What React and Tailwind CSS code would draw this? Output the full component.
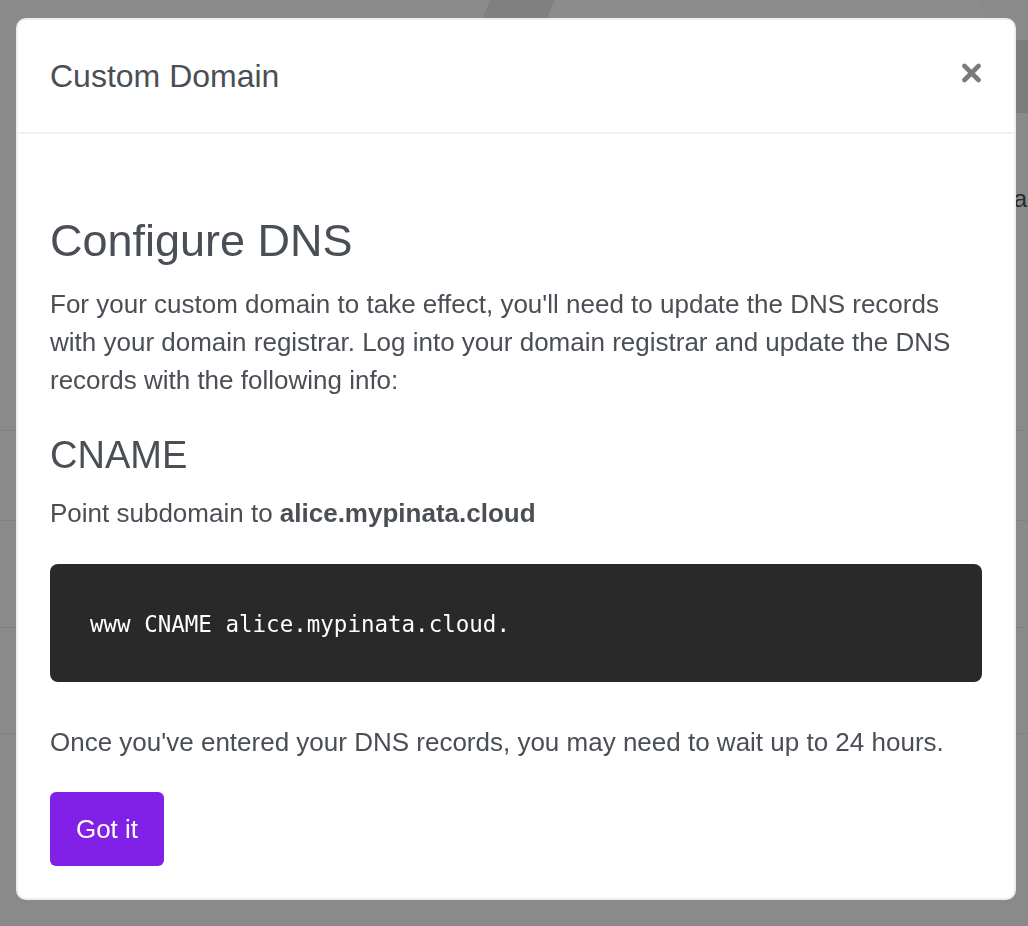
import React from 'react';

const CloseIcon = () => (
    <svg width="21" height="20" viewBox="0 0 21 20" aria-hidden="true">
        <path d="M3.5 3 L17.5 17 M17.5 3 L3.5 17" stroke="#7b7b7b" strokeWidth="4.6" strokeLinecap="round" />
    </svg>
);

const BackdropPage = () => (
    <div className="relative w-full h-[926px] bg-[#8a8a8a] overflow-hidden">
        <svg className="absolute top-0 left-0" width="1028" height="40" aria-hidden="true">
            <polygon points="490,0 555,0 546,20 482,20" fill="#808080" />
            <polygon points="555,0 980,0 985,20 546,20" fill="#8c8c8c" />
        </svg>
        <div className="flex flex-col pt-[40px]">
            <div className="flex justify-end">
                <div className="w-[12px] h-[73px] bg-[#7c7c7c]" />
            </div>
            <div className="flex justify-end h-[317px] pt-[74px]">
                <span className="text-[24px] leading-none text-[#2a2a2a] pr-[1px]" style={{ fontFamily: '"Liberation Sans", Arial, sans-serif' }}>a</span>
            </div>
            <div className="h-[90px] border-t border-[#818181]" />
            <div className="h-[107px] border-t border-[#818181]" />
            <div className="h-[106px] border-t border-[#818181]" />
            <div className="h-[106px] border-t border-[#818181]" />
        </div>
    </div>
);

const CustomDomainModal = () => (
    <div className="fixed inset-0 flex items-start">
        <div
            className="ml-[16px] mt-[18px] w-[1000px] h-[882px] bg-white rounded-[10px] border-2 border-[#eeeeee] flex flex-col text-[#4a4e55]"
            style={{ fontFamily: '"Liberation Sans", Arial, Helvetica, sans-serif' }}
        >
            <div className="h-[114px] flex items-center justify-between pl-[32px] pr-[32px] border-b-2 border-[#f0f0f4]">
                <h3 className="text-[32px] leading-none">Custom Domain</h3>
                <button className="flex items-center justify-center mt-[-7px]">
                    <CloseIcon />
                </button>
            </div>
            <div className="flex flex-col px-[32px] pt-[80px]">
                <h1 className="text-[45px] leading-[54px]">Configure DNS</h1>
                <p className="mt-[17px] text-[26px] leading-[38px]">
                    For your custom domain to take effect, you'll need to update the DNS records with your domain registrar. Log into your domain registrar and update the DNS records with the following info:
                </p>
                <h2 className="mt-[33px] text-[38px] leading-[46px]">CNAME</h2>
                <p className="mt-[16px] text-[26px] leading-[38px]">
                    Point subdomain to <strong className="font-bold">alice.mypinata.cloud</strong>
                </p>
                <div className="mt-[32px] h-[118px] rounded-[8px] bg-[#292929] flex items-center pl-[40px] pt-[4px]">
                    <code
                        className="text-[22.5px] text-white"
                        style={{ fontFamily: '"DejaVu Sans Mono", "Liberation Mono", monospace' }}
                    >
                        www CNAME alice.mypinata.cloud.
                    </code>
                </div>
                <p className="mt-[41px] text-[26px] leading-[38px]">
                    Once you've entered your DNS records, you may need to wait up to 24 hours.
                </p>
                <div className="mt-[31px]">
                    <button className="w-[114px] h-[74px] rounded-[6px] bg-[#8120e6] text-white text-[26px]">
                        Got it
                    </button>
                </div>
            </div>
        </div>
    </div>
);

export default function App() {
    return (
        <div className="relative">
            <BackdropPage />
            <CustomDomainModal />
        </div>
    );
}
